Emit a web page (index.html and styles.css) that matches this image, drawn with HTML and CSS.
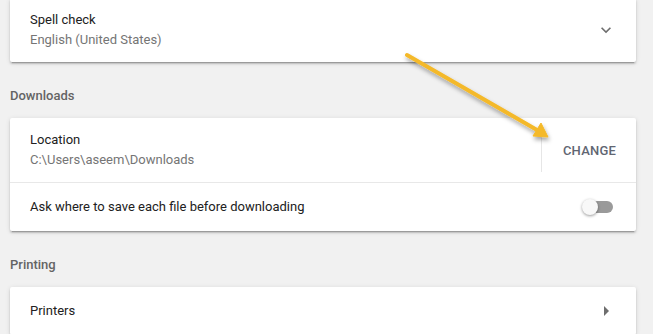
FILE: index.html
```html
<!DOCTYPE html>
<html lang="en">
<head>
    <meta charset="UTF-8">
    <meta name="viewport" content="width=device-width, initial-scale=1.0">
    <title>Settings - Advanced</title>
    <link rel="stylesheet" href="styles.css">
</head>
<body>
    <main class="page">
        <div class="card">
            <div class="row two-line">
                <div class="label">
                    <div class="primary">Spell check</div>
                    <div class="secondary">English (United States)</div>
                </div>
                <svg class="icon expand" viewBox="0 0 24 24" width="20" height="20">
                    <path d="M16.59 8.59L12 13.17 7.41 8.59 6 10l6 6 6-6z"/>
                </svg>
            </div>
        </div>

        <h2 class="section-title">Downloads</h2>
        <div class="card">
            <div class="row two-line">
                <div class="label">
                    <div class="primary">Location</div>
                    <div class="secondary">C:\Users\aseem\Downloads</div>
                </div>
                <div class="separator"></div>
                <div class="text-button">Change</div>
            </div>
            <div class="row">
                <div class="label">
                    <div class="primary">Ask where to save each file before downloading</div>
                </div>
                <div class="toggle">
                    <span class="toggle-bar"></span>
                    <span class="toggle-knob"></span>
                </div>
            </div>
        </div>

        <h2 class="section-title">Printing</h2>
        <div class="card">
            <div class="row">
                <div class="label">
                    <div class="primary">Printers</div>
                </div>
                <svg class="icon subpage" viewBox="0 0 24 24" width="24" height="24">
                    <path d="M10 17l5-5-5-5v10z"/>
                </svg>
            </div>
        </div>
    </main>

    <!-- annotation drawn on top of the screenshot -->
    <svg class="annotation" width="653" height="334" viewBox="0 0 653 334">
        <defs>
            <filter id="shade" x="-20%" y="-20%" width="140%" height="140%">
                <feDropShadow dx="1" dy="3" stdDeviation="2" flood-color="#000" flood-opacity="0.35"/>
            </filter>
        </defs>
        <g filter="url(#shade)" fill="#f4b92a" stroke="#f4b92a">
            <line x1="407" y1="55" x2="537" y2="130" stroke-width="4" stroke-linecap="round"/>
            <polygon points="548,137 533,136 541,123" stroke-width="1" stroke-linejoin="round"/>
        </g>
    </svg>
</body>
</html>
```

FILE: styles.css
```css
body {
    margin: 0;
    background: #f1f1f1;
    font-family: Roboto, "Liberation Sans", Arial, sans-serif;
    font-size: 13px;
    color: #212121;
    position: relative;
    overflow: hidden;
}

.page {
    margin-top: -2px;
    padding: 0 17px 0 10px;
}

.card {
    background: #fff;
    border-radius: 2px;
    box-shadow: 0 2px 2px 0 rgba(0, 0, 0, 0.14),
                0 1px 5px 0 rgba(0, 0, 0, 0.12),
                0 3px 1px -2px rgba(0, 0, 0, 0.2);
}

.section-title {
    margin: 0;
    padding: 22px 0 10px;
    font-size: 13px;
    font-weight: 500;
    line-height: 24px;
    color: #646464;
}

.row {
    display: flex;
    align-items: center;
    min-height: 48px;
    padding: 0 20px;
}

.row + .row {
    border-top: 1px solid #e8e8e8;
}

.row.two-line {
    min-height: 64px;
}

.label {
    flex: 1;
    line-height: 20px;
}

.secondary {
    color: #757575;
}

.icon {
    fill: #6e6e6e;
    flex: none;
}

.icon.subpage {
    margin-right: -2px;
}

.separator {
    width: 1px;
    height: 39px;
    margin-right: 21px;
    background: #e6e6e6;
    position: relative;
    top: 2px;
}

.text-button {
    text-transform: uppercase;
    font-weight: 500;
    color: #616672;
    letter-spacing: 0.2px;
}

.toggle {
    position: relative;
    width: 31px;
    height: 16px;
    margin-right: 3px;
}

.toggle-bar {
    position: absolute;
    left: 2px;
    top: 2px;
    width: 29px;
    height: 12px;
    border-radius: 6px;
    background: #9a9a9a;
}

.toggle-knob {
    position: absolute;
    left: 0;
    top: 0;
    width: 16px;
    height: 16px;
    border-radius: 50%;
    background: #f8f8f8;
    box-shadow: 0 1px 3px rgba(0, 0, 0, 0.4);
}

.annotation {
    position: absolute;
    top: 0;
    left: 0;
    pointer-events: none;
}
```
